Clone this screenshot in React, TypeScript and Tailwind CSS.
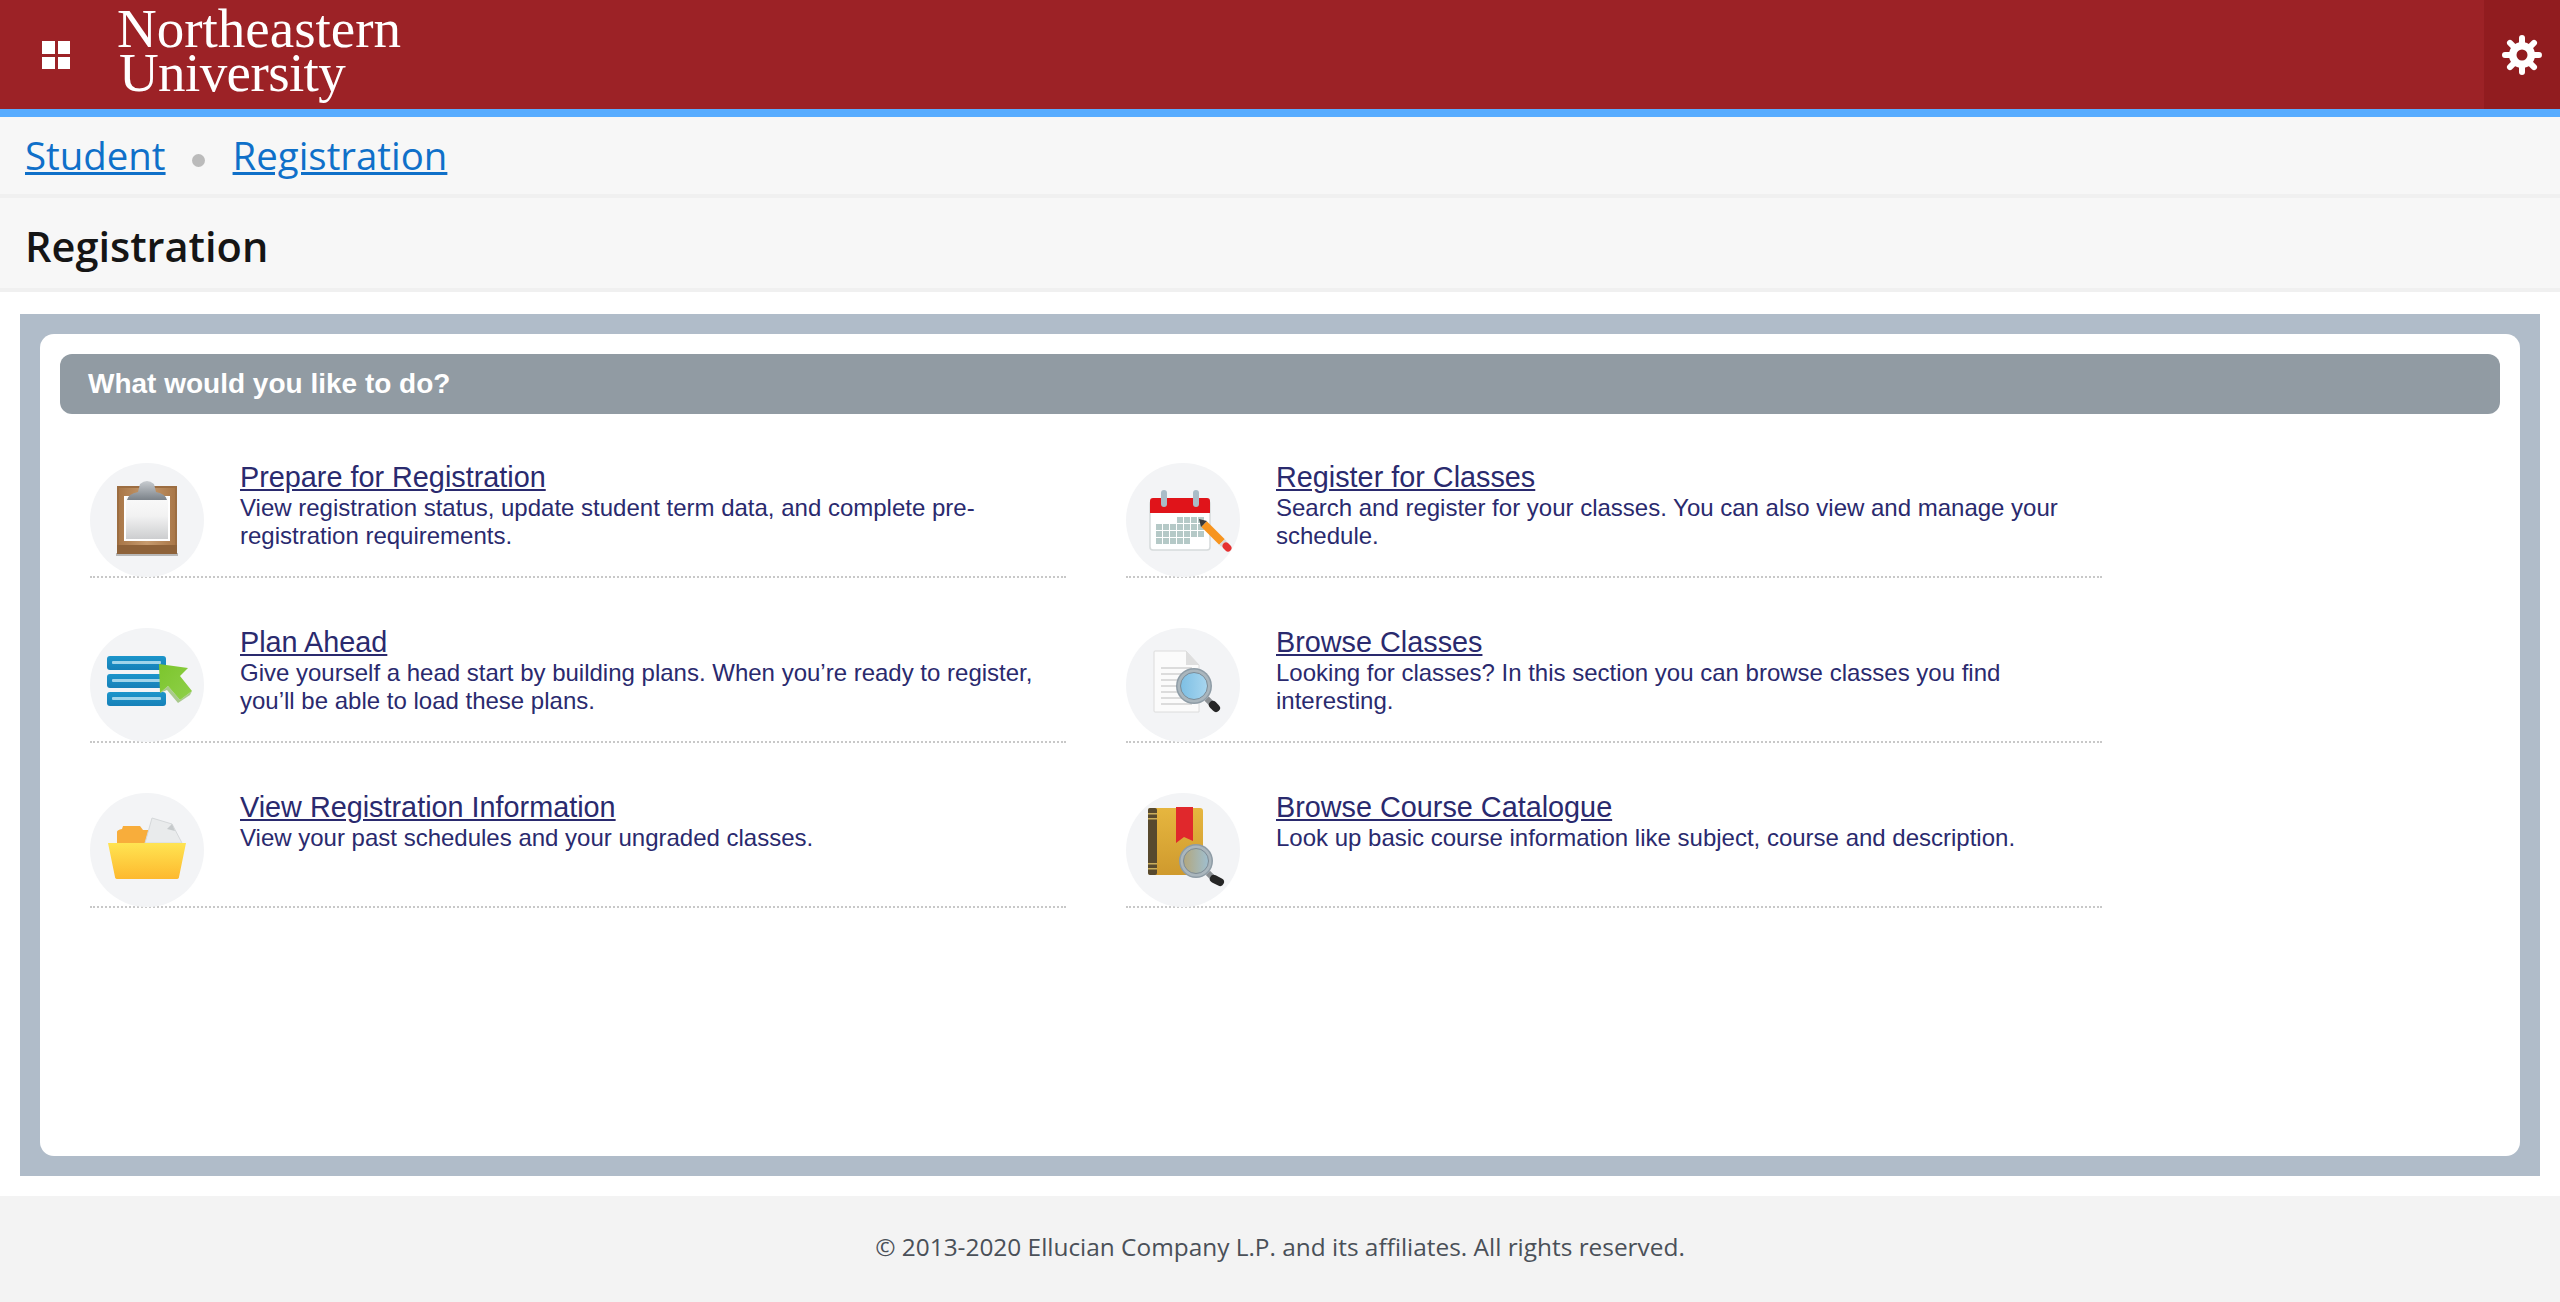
import type { ReactNode } from "react";

function IconCircle({ children }: { children: ReactNode }) {
  return (
    <div className="h-[114px] w-[114px] shrink-0 rounded-full bg-[#f3f4f6]">
      <svg viewBox="0 0 114 114" className="h-[114px] w-[114px] overflow-visible">
        {children}
      </svg>
    </div>
  );
}

function Lens({ id, cx, cy, r, hx, hy, from, to }: { id: string; cx: number; cy: number; r: number; hx: number; hy: number; from: string; to: string }) {
  return (
    <>
      <defs>
        <linearGradient id={id} x1="0" y1="0" x2="1" y2="0">
          <stop offset="0" stopColor={from} />
          <stop offset="1" stopColor={to} />
        </linearGradient>
      </defs>
      <line x1={cx + r * 0.7} y1={cy + r * 0.7} x2={cx + r * 1.05} y2={cy + r * 1.05} stroke="#8a8f93" strokeWidth="6" />
      <line x1={cx + r * 1.05} y1={cy + r * 1.05} x2={hx} y2={hy} stroke="#262626" strokeWidth="8" strokeLinecap="round" />
      <circle cx={cx} cy={cy} r={r} fill="#8e9ca6" />
      <circle cx={cx} cy={cy} r={r - 1.5} fill="#aab6bd" />
      <circle cx={cx} cy={cy} r={r - 4.5} fill={`url(#${id})`} stroke="#7d8b95" strokeWidth="1" />
    </>
  );
}

function ClipboardIcon() {
  return (
    <IconCircle>
      <defs>
        <linearGradient id="paper" x1="0" y1="0" x2="0" y2="1">
          <stop offset="0" stopColor="#fafafa" />
          <stop offset="0.45" stopColor="#f2f2f2" />
          <stop offset="1" stopColor="#cdced0" />
        </linearGradient>
        <linearGradient id="clip" x1="0" y1="0" x2="0" y2="1">
          <stop offset="0" stopColor="#c8ccd0" />
          <stop offset="1" stopColor="#7b8289" />
        </linearGradient>
        <linearGradient id="board" x1="0" y1="0" x2="1" y2="0">
          <stop offset="0" stopColor="#a97748" />
          <stop offset="0.5" stopColor="#c69a6d" />
          <stop offset="1" stopColor="#a97748" />
        </linearGradient>
      </defs>
      <rect x="26" y="90" width="62" height="3" fill="#b8b8b8" />
      <rect x="27" y="23" width="60" height="68" fill="#9c6d41" />
      <rect x="29" y="25" width="56" height="58" fill="url(#board)" />
      <rect x="27" y="82" width="60" height="9" fill="#8e6239" />
      <rect x="34" y="33" width="46" height="45" fill="#ffffff" />
      <rect x="36" y="34" width="42" height="42" fill="url(#paper)" />
      <path d="M37 37 Q38 31 48 29 L50 21 Q57 15 64 21 L66 29 Q76 31 77 37 Z" fill="url(#clip)" />
    </IconCircle>
  );
}

function PlanIcon() {
  return (
    <IconCircle>
      <defs>
        <linearGradient id="arrow" x1="0" y1="0" x2="1" y2="1">
          <stop offset="0" stopColor="#7cc52c" />
          <stop offset="1" stopColor="#8fd04a" />
        </linearGradient>
        <linearGradient id="bar" x1="0" y1="0" x2="0" y2="1">
          <stop offset="0" stopColor="#1c95cb" />
          <stop offset="1" stopColor="#1680b8" />
        </linearGradient>
      </defs>
      {[28, 46, 64].map((y) => (
        <g key={y}>
          <rect x="17" y={y} width="59" height="14" rx="3" fill="url(#bar)" />
          <rect x="22" y={y + 5} width="49" height="3" rx="1" fill="#9fd4ea" />
        </g>
      ))}
      <path d="M70 65 L78 58 L90 72 L102 63 L100 67 L88 75 L77 62 Z" fill="#a9c98c" />
      <path d="M69 36 L98 40 L90 48 L102 63 L90 72 L78 58 L70 65 Z" fill="url(#arrow)" />
    </IconCircle>
  );
}

function FolderIcon() {
  return (
    <IconCircle>
      <defs>
        <linearGradient id="folder" x1="0" y1="0" x2="0" y2="1">
          <stop offset="0" stopColor="#ffe452" />
          <stop offset="1" stopColor="#fdb92e" />
        </linearGradient>
      </defs>
      <path d="M27 50 V39 Q27 37 32 36 L33 33 H50 L53 37 H60 V50 Z" fill="#f8ad3b" />
      <path d="M55 50 L62 25 L82 31 L92 50 Z" fill="#e9ebec" stroke="#d5d8da" strokeWidth="1" />
      <path d="M82 31 L77 36 L85 38 Z" fill="#c6cacc" />
      <path d="M18 50 H96 L89 84 Q89 86 86 86 H28 Q25 86 25 84 Z" fill="url(#folder)" />
    </IconCircle>
  );
}

function CalendarIcon() {
  const cells: number[][] = [];
  for (let r = 0; r < 4; r++) {
    for (let c = 0; c < 7; c++) {
      if ((r === 0 && c < 3) || (r === 3 && c > 4)) continue;
      cells.push([30 + c * 7, 54 + r * 7]);
    }
  }
  return (
    <IconCircle>
      <rect x="24" y="38" width="60" height="49" rx="3" fill="#ffffff" stroke="#d6dadb" strokeWidth="1.5" />
      <path d="M24 50 V38 Q24 35 27 35 H81 Q84 35 84 38 V50 Z" fill="#e0141a" />
      <rect x="35" y="27" width="6" height="17" rx="3" fill="#a9bcc7" />
      <rect x="67" y="27" width="6" height="17" rx="3" fill="#a9bcc7" />
      {cells.map(([x, y]) => (
        <rect key={`${x}-${y}`} x={x} y={y} width="6" height="6" fill="#b5c9c7" />
      ))}
      <line x1="78" y1="61" x2="96" y2="79" stroke="#f7941e" strokeWidth="8" />
      <line x1="96" y1="79" x2="98" y2="81" stroke="#d8d8d8" strokeWidth="8" />
      <line x1="100" y1="83" x2="102" y2="85" stroke="#e53030" strokeWidth="7" strokeLinecap="round" />
      <path d="M73 56 L81 58 L75 64 Z" fill="#3a3a3a" />
    </IconCircle>
  );
}

function DocSearchIcon() {
  return (
    <IconCircle>
      <path d="M28 24 Q28 23 29 23 H60 L73 37 V84 H29 Q28 84 28 83 Z" fill="#fbfbfb" stroke="#dcdcdc" strokeWidth="1" />
      <path d="M60 23 L73 37 H60 Z" fill="#dedede" />
      {[40, 46, 52, 58, 64, 70, 76].map((y) => (
        <line key={y} x1="35" y1={y} x2={y > 40 && y < 70 ? 55 : 66} y2={y} stroke="#dcdcdc" strokeWidth="2" />
      ))}
      <Lens id="lens-doc" cx={68} cy={58} r={18} hx={90} hy={80} from="#7dbfe4" to="#a8d6ef" />
    </IconCircle>
  );
}

function BookIcon() {
  return (
    <IconCircle>
      <defs>
        <linearGradient id="book" x1="0" y1="0" x2="0" y2="1">
          <stop offset="0" stopColor="#e6b63f" />
          <stop offset="1" stopColor="#cf9a2e" />
        </linearGradient>
      </defs>
      <rect x="22" y="15" width="55" height="67" rx="3" fill="url(#book)" />
      <rect x="22" y="15" width="9" height="67" rx="2" fill="#57492e" />
      {[20, 25, 70, 75].map((y) => (
        <rect key={y} x="22" y={y} width="9" height="1.5" fill="#c9ad5c" />
      ))}
      <path d="M50 14 H67 V48 L58 44 L50 50 Z" fill="#e0282c" />
      <Lens id="lens-book" cx={70} cy={68} r={17} hx={94} hy={89} from="#b3a77d" to="#9fbfd0" />
    </IconCircle>
  );
}

const items = [
  {
    title: "Prepare for Registration",
    desc: (
      <>
        View registration status, update student term data, and complete pre-
        <br />
        registration requirements.
      </>
    ),
    icon: <ClipboardIcon />,
  },
  {
    title: "Register for Classes",
    desc: (
      <>
        Search and register for your classes. You can also view and manage your
        <br />
        schedule.
      </>
    ),
    icon: <CalendarIcon />,
  },
  {
    title: "Plan Ahead",
    desc: (
      <>
        Give yourself a head start by building plans. When you’re ready to register,
        <br />
        you’ll be able to load these plans.
      </>
    ),
    icon: <PlanIcon />,
  },
  {
    title: "Browse Classes",
    desc: (
      <>
        Looking for classes? In this section you can browse classes you find
        <br />
        interesting.
      </>
    ),
    icon: <DocSearchIcon />,
  },
  {
    title: "View Registration Information",
    desc: <>View your past schedules and your ungraded classes.</>,
    icon: <FolderIcon />,
  },
  {
    title: "Browse Course Catalogue",
    desc: <>Look up basic course information like subject, course and description.</>,
    icon: <BookIcon />,
  },
];

export default function App() {
  return (
    <div className="flex h-[1302px] flex-col overflow-hidden bg-white [font-family:'Open_Sans',sans-serif]">
      <header className="flex h-[117px] shrink-0 border-b-[8px] border-[#58acff] bg-[#9c2226]">
        <div className="ml-[42px] mt-[41px] grid h-[28px] w-[28px] grid-cols-2 gap-[3px]">
          <span className="bg-white" />
          <span className="bg-white" />
          <span className="bg-white" />
          <span className="bg-white" />
        </div>
        <div className="ml-[47px] mt-[7px] text-[55px] leading-[44px] text-white [font-family:'Liberation_Serif',serif]">
          <div>Northeastern</div>
          <div className="pl-[2px] tracking-[-0.6px]">University</div>
        </div>
        <div className="ml-auto flex h-[109px] w-[76px] items-center justify-center bg-[#911c1f]">
          <svg viewBox="0 0 40 40" className="h-10 w-10">
            <g stroke="#fff" strokeWidth="6" strokeLinecap="round">
              {[0, 45, 90, 135].map((a) => (
                <line key={a} x1="20" y1="3" x2="20" y2="37" transform={`rotate(${a} 20 20)`} />
              ))}
            </g>
            <circle cx="20" cy="20" r="13" fill="#fff" />
            <circle cx="20" cy="20" r="5.5" fill="#911c1f" />
          </svg>
        </div>
      </header>

      <nav className="flex h-[81px] shrink-0 items-center border-b-4 border-[#f0f0f0] bg-[#f7f7f7] pl-[25px] text-[38.4px] text-[#0f70c9]">
        <a href="#student" className="underline">Student</a>
        <span className="ml-[26px] mr-[28px] mt-[10px] h-[13px] w-[13px] rounded-full bg-[#bbbbbb]" />
        <a href="#registration" className="underline">Registration</a>
      </nav>

      <div className="flex h-[94px] shrink-0 items-center border-b-4 border-[#f0f0f0] bg-[#f7f7f7] pl-[25px] pt-[6px] text-[41.5px] font-semibold text-[#151515]">
        Registration
      </div>

      <main className="mx-[20px] mt-[22px] flex h-[862px] shrink-0 bg-[#b0bcc9] p-[20px]">
        <div className="w-full rounded-[14px] bg-white px-[20px] pt-[20px] [font-family:'Liberation_Sans',sans-serif]">
          <div className="flex h-[60px] items-center rounded-[12px] bg-[#919ba3] pl-[28px] text-[28px] font-bold text-white">
            What would you like to do?
          </div>
          <div className="mt-[49px] grid grid-cols-[976px_976px] gap-x-[60px] gap-y-[50px] pl-[30px]">
            {items.map((item) => (
              <div key={item.title} className="flex h-[115px] gap-[36px] border-b-2 border-dotted border-[#c8c8c8] text-[#2a2a6e]">
                {item.icon}
                <div>
                  <a href="#item" className="-mt-px mb-px block text-[28.8px] leading-[31px] underline">
                    {item.title}
                  </a>
                  <p className="text-[24px] leading-[28px]">{item.desc}</p>
                </div>
              </div>
            ))}
          </div>
        </div>
      </main>

      <footer className="mt-[20px] flex flex-1 items-center justify-center bg-[#f3f3f3] pb-[3px] text-[24.4px] text-[#4a5058]">
        © 2013-2020 Ellucian Company L.P. and its affiliates. All rights reserved.
      </footer>
    </div>
  );
}
